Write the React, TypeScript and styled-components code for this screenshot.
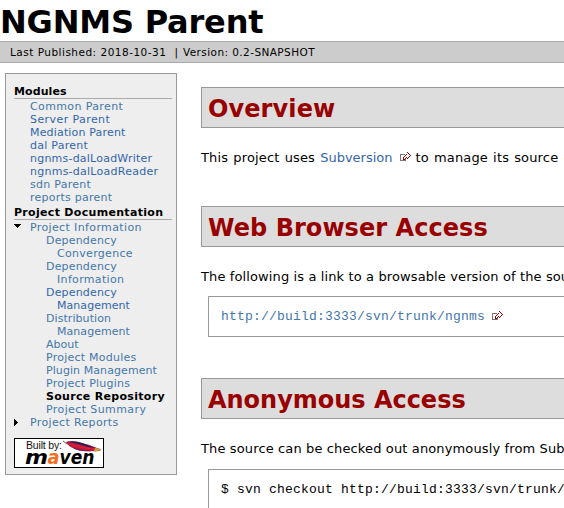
import React from 'react';
import styled, { createGlobalStyle } from 'styled-components';

const GlobalStyle = createGlobalStyle`
  html, body { margin: 0; padding: 0; overflow: hidden; background: #fff; }
  body { font-family: "DejaVu Sans", Verdana, sans-serif; font-size: 13px; color: #000; }
`;

const Page = styled.div`
  width: 564px;
  height: 508px;
  overflow: hidden;
  white-space: nowrap;
`;

const Title = styled.h1`
  margin: 0;
  padding-top: 3px;
  font-size: 32px;
  line-height: 38px;
  letter-spacing: -0.19px;
`;

const Breadcrumbs = styled.div`
  display: flex;
  height: 20px;
  padding-left: 10px;
  border-top: 1px solid #aaa;
  border-bottom: 1px solid #aaa;
  background: #ccc;
  font-size: 10.5px;
  line-height: 20px;
`;

const Crumb = styled.span<{ $spacing: number; $gap?: number }>`
  letter-spacing: ${p => p.$spacing}px;
  margin-right: ${p => p.$gap ?? 0}px;
`;

const Columns = styled.div`
  display: flex;
  align-items: flex-start;
`;

const Sidebar = styled.nav`
  box-sizing: border-box;
  flex: none;
  width: 172px;
  margin: 10px 24px 0 5px;
  padding: 9px 4px 6px 8px;
  border: 1px solid #999;
  background: #eee;
  font-size: 11px;
  line-height: 13px;
`;

const GroupTitle = styled.h5<{ $spacing: number }>`
  margin: 0 0 1px;
  padding-top: 2px;
  border-bottom: 1px solid #aaa;
  font-size: 11px;
  line-height: 13px;
  letter-spacing: ${p => p.$spacing}px;
`;

const Item = styled.div<{ $indent: number }>`
  display: flex;
  align-items: center;
  height: 13px;
  padding-left: ${p => p.$indent}px;
`;

const Link = styled.a<{ $fresh?: boolean; $spacing?: number }>`
  color: ${p => (p.$fresh ? '#36a' : '#47a')};
  letter-spacing: ${p => p.$spacing ?? 0}px;
`;

const Current = styled.strong`
  letter-spacing: 0.31px;
`;

const Marker = styled.svg`
  display: block;
  flex: none;
  width: 16px;
  height: 13px;
`;

const Logo = styled.svg`
  display: block;
  margin-top: 9px;
`;

const Content = styled.main`
  flex: 1;
  min-width: 0;
  padding-top: 24px;
`;

const Section = styled.section`
  height: 119px;
  &:nth-child(2) { height: 172px; }
`;

const Heading = styled.h2<{ $spacing: number }>`
  box-sizing: border-box;
  height: 41px;
  margin: 0 0 21px;
  padding: 2px 0 0 6px;
  border: 1px solid #999;
  border-right: 0;
  background: #ddd;
  color: #900;
  font-size: 24px;
  line-height: 39px;
  letter-spacing: ${p => p.$spacing}px;
`;

const Paragraph = styled.p<{ $spacing?: number; $word?: number }>`
  margin: 0;
  height: 17px;
  line-height: 17px;
  letter-spacing: ${p => p.$spacing ?? 0.12}px;
  word-spacing: ${p => p.$word ?? 0}px;
`;

const Source = styled.pre<{ $gap: number }>`
  margin: ${p => p.$gap}px 0 0 7px;
  height: 39px;
  padding-left: 12px;
  border: 1px solid #999;
  border-right: 0;
  font: 13px/39px "Liberation Mono", "Courier New", monospace;
  letter-spacing: 0.2px;
`;

const IconSvg = styled.svg<{ $left: number; $right: number; $drop: number }>`
  margin: 0 ${p => p.$right}px 0 ${p => p.$left}px;
  vertical-align: ${p => p.$drop}px;
`;

function ExternalIcon({ left, right = 0, drop = 0 }: { left: number; right?: number; drop?: number }) {
  return (
    <IconSvg $left={left} $right={right} $drop={drop} width="11" height="10" viewBox="0 0 11 10" shapeRendering="crispEdges">
      <path d="M0 2h5v1H1v5h4V7h1v2H0z" fill="#777" />
      <path
        d="M7 0h1v1h1v1h1v1h1v1h-1v1h-1v1h-1v1h-1V6H6v1H5v1H3V5h1V4h1V3h1V2h1z"
        fill="#900"
      />
      <path d="M7 1h1v1h1v1h1v1H9v1H8v1H7V5H6v1H5v1H4V5h1V4h1V3h1z" fill="#fff" />
    </IconSvg>
  );
}

type Entry = { text: string; indent: number; spacing?: number; fresh?: boolean; marker?: 'open' | 'closed'; current?: boolean };

const modules: Entry[] = [
  { text: 'Common Parent', indent: 16, spacing: 0.38 },
  { text: 'Server Parent', indent: 16, spacing: 0.42, fresh: true },
  { text: 'Mediation Parent', indent: 16, spacing: 0.17, fresh: true },
  { text: 'dal Parent', indent: 16, spacing: 0.25, fresh: true },
  { text: 'ngnms-dalLoadWriter', indent: 16, spacing: 0.22, fresh: true },
  { text: 'ngnms-dalLoadReader', indent: 16, spacing: 0.25, fresh: true },
  { text: 'sdn Parent', indent: 16, spacing: 0.28 },
  { text: 'reports parent', indent: 16, spacing: 0.24 },
];

const documentation: Entry[] = [
  { text: 'Project Information', indent: 0, spacing: 0.37, marker: 'open' },
  { text: 'Dependency', indent: 32, spacing: 0.18 },
  { text: 'Convergence', indent: 43, spacing: 0.3 },
  { text: 'Dependency', indent: 32, spacing: 0.18 },
  { text: 'Information', indent: 43, spacing: 0.33 },
  { text: 'Dependency', indent: 32, spacing: 0.18, fresh: true },
  { text: 'Management', indent: 43, spacing: 0.05, fresh: true },
  { text: 'Distribution', indent: 32, spacing: 0.07 },
  { text: 'Management', indent: 43, spacing: 0.05 },
  { text: 'About', indent: 32, spacing: 0 },
  { text: 'Project Modules', indent: 32, spacing: 0.24 },
  { text: 'Plugin Management', indent: 32, spacing: 0.08 },
  { text: 'Project Plugins', indent: 32, spacing: 0.25 },
  { text: 'Source Repository', indent: 32, current: true },
  { text: 'Project Summary', indent: 32, spacing: 0.4 },
  { text: 'Project Reports', indent: 0, spacing: 0.35, marker: 'closed' },
];

function NavItem({ entry }: { entry: Entry }) {
  return (
    <Item $indent={entry.indent}>
      {entry.marker && (
        <Marker viewBox="0 0 16 13" shapeRendering="crispEdges">
          {entry.marker === 'open' ? (
            <path d="M0 3h7v1H6v1H5v1H4v1H3V6H2V5H1V4H0z" />
          ) : (
            <path d="M0 3h1v1h1v1h1v1h1v1H3v1H2v1H1v1H0z" />
          )}
        </Marker>
      )}
      {entry.current ? (
        <Current>{entry.text}</Current>
      ) : (
        <Link $fresh={entry.fresh} $spacing={entry.spacing}>{entry.text}</Link>
      )}
    </Item>
  );
}

function MavenLogo() {
  return (
    <Logo width="90" height="30" viewBox="0 0 90 30">
      <rect x=".5" y=".5" width="89" height="29" fill="#fff" stroke="#000" />
      <text x="12" y="10.5" fontFamily="Liberation Sans, sans-serif" fontSize="10.5" fill="#111" textLength="36">Built by:</text>
      <g fontFamily="DejaVu Sans, sans-serif" fontWeight="bold" fontStyle="italic" fontSize="20">
        <text x="11" y="26" textLength="23" lengthAdjust="spacingAndGlyphs">m</text>
        <text x="33.5" y="26" fill="#f37021" textLength="12" lengthAdjust="spacingAndGlyphs">a</text>
        <text x="45.5" y="26" textLength="35" lengthAdjust="spacingAndGlyphs">ven</text>
      </g>
      <path d="M49 3l4 3" stroke="#333" strokeWidth=".8" />
      <path d="M52 4Q60 2 68 5Q77 7 83 10Q87 11 87 12Q85 14 78 13Q66 14 59 10Q54 8 52 4z" fill="#c4163c" />
      <path d="M52 4Q60 2 68 5L82 10Q72 9 64 6Q57 4 52 4z" fill="#252350" />
      <path d="M57 9Q66 12.5 78 13Q66 14 59 10z" fill="#54236b" />
      <path d="M54 5.5Q66 10 81 11.5" fill="none" stroke="#e52732" />
      <path d="M81 10Q87 10.5 87 12Q84 13.5 80 13z" fill="#bda14b" />
    </Logo>
  );
}

export default function App() {
  return (
    <Page>
      <GlobalStyle />
      <Title>NGNMS Parent</Title>
      <Breadcrumbs>
        <Crumb $spacing={0.49} $gap={8}>Last Published: 2018-10-31</Crumb>
        <Crumb $spacing={0} $gap={5}>|</Crumb>
        <Crumb $spacing={0.42}>Version: 0.2-SNAPSHOT</Crumb>
      </Breadcrumbs>
      <Columns>
        <Sidebar>
          <GroupTitle $spacing={0.1}>Modules</GroupTitle>
          {modules.map((entry, i) => <NavItem key={i} entry={entry} />)}
          <GroupTitle $spacing={0.31}>Project Documentation</GroupTitle>
          {documentation.map((entry, i) => <NavItem key={i} entry={entry} />)}
          <MavenLogo />
        </Sidebar>
        <Content>
          <Section>
            <Heading $spacing={0.1}>Overview</Heading>
            <Paragraph $spacing={0.16} $word={0.8}>
              This project uses <Link $fresh>Subversion</Link>
              <ExternalIcon left={7} right={5} />
              to manage its source code.
            </Paragraph>
          </Section>
          <Section>
            <Heading $spacing={0.05}>Web Browser Access</Heading>
            <Paragraph>The following is a link to a browsable version of the source repository:</Paragraph>
            <Source $gap={11}>
              <Link $spacing={0.2}>http://build:3333/svn/trunk/ngnms</Link>
              <ExternalIcon left={7} drop={-1} />
            </Source>
          </Section>
          <Section>
            <Heading $spacing={-0.02}>Anonymous Access</Heading>
            <Paragraph $spacing={0.13}>The source can be checked out anonymously from Subversion with this command:</Paragraph>
            <Source $gap={12}>$ svn checkout http://build:3333/svn/trunk/ngnms ngnms</Source>
          </Section>
        </Content>
      </Columns>
    </Page>
  );
}
